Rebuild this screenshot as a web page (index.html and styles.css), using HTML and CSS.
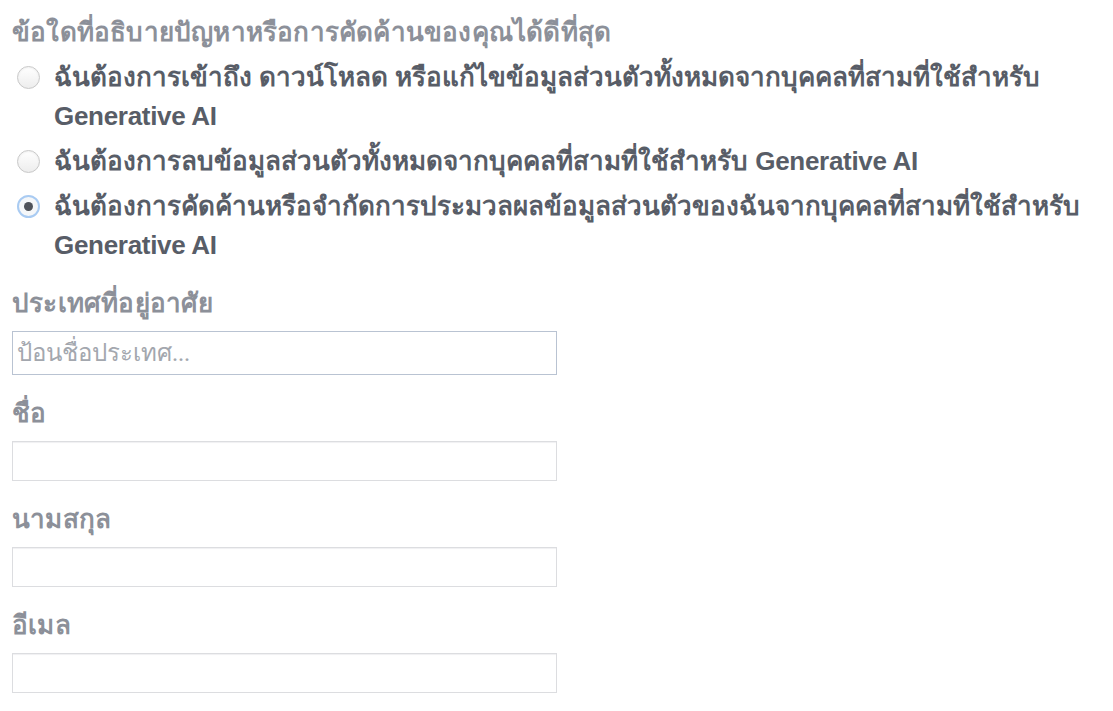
FILE: index.html
```html
<!DOCTYPE html>
<html lang="th">
  <head>
    <meta charset="UTF-8" />
    <meta name="viewport" content="width=device-width, initial-scale=1.0" />
    <link rel="stylesheet" href="styles.css">
  </head>
  <body>
    <form class="request-form">
      <div class="field field-options" role="radiogroup">
        <div class="field-label">ข้อใดที่อธิบายปัญหาหรือการคัดค้านของคุณได้ดีที่สุด</div>
        <div class="options">
          <label class="option">
            <input type="radio" name="reason" value="access" />
            <span class="radio"></span>
            <span class="option-text">ฉันต้องการเข้าถึง ดาวน์โหลด หรือแก้ไขข้อมูลส่วนตัวทั้งหมดจากบุคคลที่สามที่ใช้สำหรับ <span class="latin">Generative AI</span></span>
          </label>
          <label class="option">
            <input type="radio" name="reason" value="delete" />
            <span class="radio"></span>
            <span class="option-text">ฉันต้องการลบข้อมูลส่วนตัวทั้งหมดจากบุคคลที่สามที่ใช้สำหรับ <span class="latin">Generative AI</span></span>
          </label>
          <label class="option">
            <input type="radio" name="reason" value="object" checked />
            <span class="radio"></span>
            <span class="option-text">ฉันต้องการคัดค้านหรือจำกัดการประมวลผลข้อมูลส่วนตัวของฉันจากบุคคลที่สามที่ใช้สำหรับ <span class="latin">Generative AI</span></span>
          </label>
        </div>
      </div>

      <div class="field">
        <label class="field-label" for="country">ประเทศที่อยู่อาศัย</label>
        <input class="text-input country-input" id="country" type="text" placeholder="ป้อนชื่อประเทศ..." />
      </div>

      <div class="field">
        <label class="field-label" for="first-name">ชื่อ</label>
        <input class="text-input" id="first-name" type="text" />
      </div>

      <div class="field">
        <label class="field-label" for="last-name">นามสกุล</label>
        <input class="text-input" id="last-name" type="text" />
      </div>

      <div class="field">
        <label class="field-label" for="email">อีเมล</label>
        <input class="text-input" id="email" type="email" />
      </div>
    </form>
  </body>
</html>
```

FILE: styles.css
```css
body {
  margin: 0;
  padding: 16px 12px 0;
  background: #ffffff;
  font-family: "Liberation Sans", Tahoma, sans-serif;
}

.request-form {
  display: flex;
  flex-direction: column;
  gap: 22px;
}

.field {
  display: flex;
  flex-direction: column;
  gap: 12px;
}

.field-options {
  gap: 10px;
}

.field-label {
  font-size: 26px;
  font-weight: 700;
  line-height: 32px;
  letter-spacing: 0.2px;
  color: #8c9099;
}

.options {
  display: flex;
  flex-direction: column;
  gap: 6px;
}

.option {
  display: flex;
  align-items: flex-start;
  gap: 14px;
  padding-left: 5px;
  font-size: 26px;
  font-weight: 700;
  line-height: 39px;
  color: #585d67;
  cursor: pointer;
}

.latin {
  letter-spacing: -0.3px;
}

.option input {
  display: none;
}

.radio {
  flex: none;
  box-sizing: border-box;
  width: 23px;
  height: 23px;
  margin-top: 8px;
  border: 1px solid #c8c8c8;
  border-radius: 50%;
  background: linear-gradient(#ffffff, #ededed);
  box-shadow: inset 0 1px 2px rgba(0, 0, 0, 0.06);
  display: flex;
  align-items: center;
  justify-content: center;
}

.option input:checked + .radio {
  border: 2px solid #a9cbf2;
  background: #f5f7f9;
  box-shadow: none;
}

.option input:checked + .radio::after {
  content: "";
  width: 9px;
  height: 9px;
  border-radius: 50%;
  background: #4f535a;
}

.text-input {
  width: 545px;
  height: 40px;
  box-sizing: border-box;
  margin: 0;
  padding: 0 4px;
  border: 1px solid #dcdde0;
  border-radius: 0;
  background: #ffffff;
  box-shadow: inset 0 2px 1px -1px #f0f0f2;
  font-family: "Liberation Serif", serif;
  font-size: 24px;
  color: #555a64;
  outline: none;
}

.country-input {
  height: 44px;
  border-color: #b9c3d2;
  box-shadow: none;
}

.text-input::placeholder {
  color: #a3a7ae;
}
```
